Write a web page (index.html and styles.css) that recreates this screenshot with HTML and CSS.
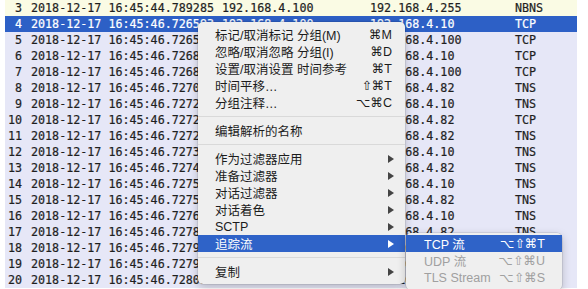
FILE: index.html
```html
<!DOCTYPE html>
<html lang="zh-CN">
<head>
<meta charset="utf-8">
<link rel="stylesheet" href="styles.css">
</head>
<body>
<div class="table">
  <div class="row nbns"><span class="no">3</span><span class="time">2018-12-17 16:45:44.789285</span><span class="src">192.168.4.100</span><span class="dst">192.168.4.255</span><span class="proto">NBNS</span></div>
  <div class="row sel"><span class="no">4</span><span class="time">2018-12-17 16:45:46.726593</span><span class="src">192.168.4.100</span><span class="dst">192.168.4.10</span><span class="proto">TCP</span></div>
  <div class="row"><span class="no">5</span><span class="time">2018-12-17 16:45:46.726598</span><span class="src">192.168.4.10</span><span class="dst">192.168.4.100</span><span class="proto">TCP</span></div>
  <div class="row"><span class="no">6</span><span class="time">2018-12-17 16:45:46.726811</span><span class="src">192.168.4.100</span><span class="dst">192.168.4.10</span><span class="proto">TCP</span></div>
  <div class="row"><span class="no">7</span><span class="time">2018-12-17 16:45:46.726853</span><span class="src">192.168.4.10</span><span class="dst">192.168.4.100</span><span class="proto">TCP</span></div>
  <div class="row"><span class="no">8</span><span class="time">2018-12-17 16:45:46.727012</span><span class="src">192.168.4.10</span><span class="dst">192.168.4.82</span><span class="proto">TNS</span></div>
  <div class="row"><span class="no">9</span><span class="time">2018-12-17 16:45:46.727204</span><span class="src">192.168.4.82</span><span class="dst">192.168.4.10</span><span class="proto">TNS</span></div>
  <div class="row"><span class="no">10</span><span class="time">2018-12-17 16:45:46.727231</span><span class="src">192.168.4.10</span><span class="dst">192.168.4.82</span><span class="proto">TCP</span></div>
  <div class="row"><span class="no">11</span><span class="time">2018-12-17 16:45:46.727259</span><span class="src">192.168.4.10</span><span class="dst">192.168.4.82</span><span class="proto">TNS</span></div>
  <div class="row"><span class="no">12</span><span class="time">2018-12-17 16:45:46.727366</span><span class="src">192.168.4.82</span><span class="dst">192.168.4.10</span><span class="proto">TNS</span></div>
  <div class="row"><span class="no">13</span><span class="time">2018-12-17 16:45:46.727421</span><span class="src">192.168.4.10</span><span class="dst">192.168.4.82</span><span class="proto">TNS</span></div>
  <div class="row"><span class="no">14</span><span class="time">2018-12-17 16:45:46.727503</span><span class="src">192.168.4.82</span><span class="dst">192.168.4.10</span><span class="proto">TNS</span></div>
  <div class="row"><span class="no">15</span><span class="time">2018-12-17 16:45:46.727547</span><span class="src">192.168.4.10</span><span class="dst">192.168.4.82</span><span class="proto">TNS</span></div>
  <div class="row"><span class="no">16</span><span class="time">2018-12-17 16:45:46.727640</span><span class="src">192.168.4.82</span><span class="dst">192.168.4.10</span><span class="proto">TNS</span></div>
  <div class="row"><span class="no">17</span><span class="time">2018-12-17 16:45:46.727812</span><span class="src">192.168.4.10</span><span class="dst">192.168.4.82</span><span class="proto">TNS</span></div>
  <div class="row"><span class="no">18</span><span class="time">2018-12-17 16:45:46.727903</span><span class="src">192.168.4.82</span><span class="dst">192.168.4.10</span><span class="proto">TNS</span></div>
  <div class="row"><span class="no">19</span><span class="time">2018-12-17 16:45:46.727955</span><span class="src">192.168.4.10</span><span class="dst">192.168.4.82</span><span class="proto">TNS</span></div>
  <div class="row"><span class="no">20</span><span class="time">2018-12-17 16:45:46.728011</span><span class="src">192.168.4.82</span><span class="dst">192.168.4.10</span><span class="proto">TNS</span></div>
</div>

<div class="menu">
  <div class="item"><span class="label">标记/取消标记 分组(M)</span><span class="key">⌘M</span></div>
  <div class="item"><span class="label">忽略/取消忽略 分组(I)</span><span class="key">⌘D</span></div>
  <div class="item"><span class="label">设置/取消设置 时间参考</span><span class="key">⌘T</span></div>
  <div class="item"><span class="label">时间平移…</span><span class="key">⇧⌘T</span></div>
  <div class="item"><span class="label">分组注释…</span><span class="key">⌥⌘C</span></div>
  <div class="sep"></div>
  <div class="item"><span class="label">编辑解析的名称</span></div>
  <div class="sep"></div>
  <div class="item"><span class="label">作为过滤器应用</span><svg class="arrow" viewBox="0 0 6 8"><polygon points="0,0 6,4 0,8"/></svg></div>
  <div class="item"><span class="label">准备过滤器</span><svg class="arrow" viewBox="0 0 6 8"><polygon points="0,0 6,4 0,8"/></svg></div>
  <div class="item"><span class="label">对话过滤器</span><svg class="arrow" viewBox="0 0 6 8"><polygon points="0,0 6,4 0,8"/></svg></div>
  <div class="item"><span class="label">对话着色</span><svg class="arrow" viewBox="0 0 6 8"><polygon points="0,0 6,4 0,8"/></svg></div>
  <div class="item"><span class="label">SCTP</span><svg class="arrow" viewBox="0 0 6 8"><polygon points="0,0 6,4 0,8"/></svg></div>
  <div class="item active"><span class="label">追踪流</span><svg class="arrow" viewBox="0 0 6 8"><polygon points="0,0 6,4 0,8"/></svg></div>
  <div class="sep"></div>
  <div class="item"><span class="label">复制</span><svg class="arrow" viewBox="0 0 6 8"><polygon points="0,0 6,4 0,8"/></svg></div>
</div>

<div class="submenu">
  <div class="item active"><span class="label">TCP 流</span><span class="key">⌥⇧⌘T</span></div>
  <div class="item disabled"><span class="label">UDP 流</span><span class="key">⌥⇧⌘U</span></div>
  <div class="item disabled"><span class="label">TLS Stream</span><span class="key">⌥⇧⌘S</span></div>
</div>
</body>
</html>
```

FILE: styles.css
```css
html, body {
  margin: 0;
  padding: 0;
  background: #ffffff;
  overflow: hidden;
}

body {
  width: 588px;
  height: 289px;
  position: relative;
}

.table {
  margin-left: 5px;
  width: 572px;
  font-family: "DejaVu Sans Mono", "Liberation Mono", monospace;
  font-size: 11.7px;
  color: #1f1f1f;
  -webkit-text-stroke: 0.2px currentColor;
}

.row {
  display: flex;
  height: 16px;
  line-height: 16px;
  background: #e6e7f7;
  white-space: nowrap;
  overflow: hidden;
}

.row.nbns {
  background: #fafbe4;
}

.row.sel {
  background: #2d60c6;
  color: #ffffff;
}

.no {
  width: 17px;
  text-align: right;
  flex: none;
}

.time {
  margin-left: 9px;
  width: 191px;
  flex: none;
}

.src {
  width: 148px;
  flex: none;
}

.dst {
  width: 145px;
  flex: none;
}

.proto {
  flex: none;
}

.menu, .submenu {
  position: absolute;
  background: #efefef;
  border-radius: 5px;
  box-shadow: 0 3px 10px rgba(0, 0, 0, 0.22), 0 0 0 0.5px rgba(0, 0, 0, 0.15);
  font-family: "Liberation Sans", "Noto Sans CJK SC", sans-serif;
  font-size: 12.5px;
  color: #1c1c1c;
}

.menu {
  left: 198px;
  top: 22px;
  width: 207px;
  padding: 4px 0;
}

.submenu {
  left: 406px;
  top: 233px;
  width: 156px;
  padding: 2px 0 4px;
}

.item {
  display: flex;
  align-items: center;
  height: 17px;
  padding: 0 13px 0 17px;
  white-space: nowrap;
}

.submenu .item {
  padding: 0 17px 0 18px;
}

.label {
  flex: 1;
}

.key {
  font-family: "Liberation Sans", "DejaVu Sans", sans-serif;
  font-size: 12.5px;
}

.arrow {
  width: 6px;
  height: 8px;
  margin-right: -2px;
  fill: #444444;
}

.item.active {
  background: #2f63c8;
  color: #ffffff;
}

.item.active .arrow {
  fill: #ffffff;
}

.item.disabled {
  color: #a0a0a0;
}

.sep {
  height: 11px;
  display: flex;
  align-items: center;
}

.sep::before {
  content: "";
  display: block;
  width: 100%;
  height: 1px;
  background: #d9d9d9;
}
```
